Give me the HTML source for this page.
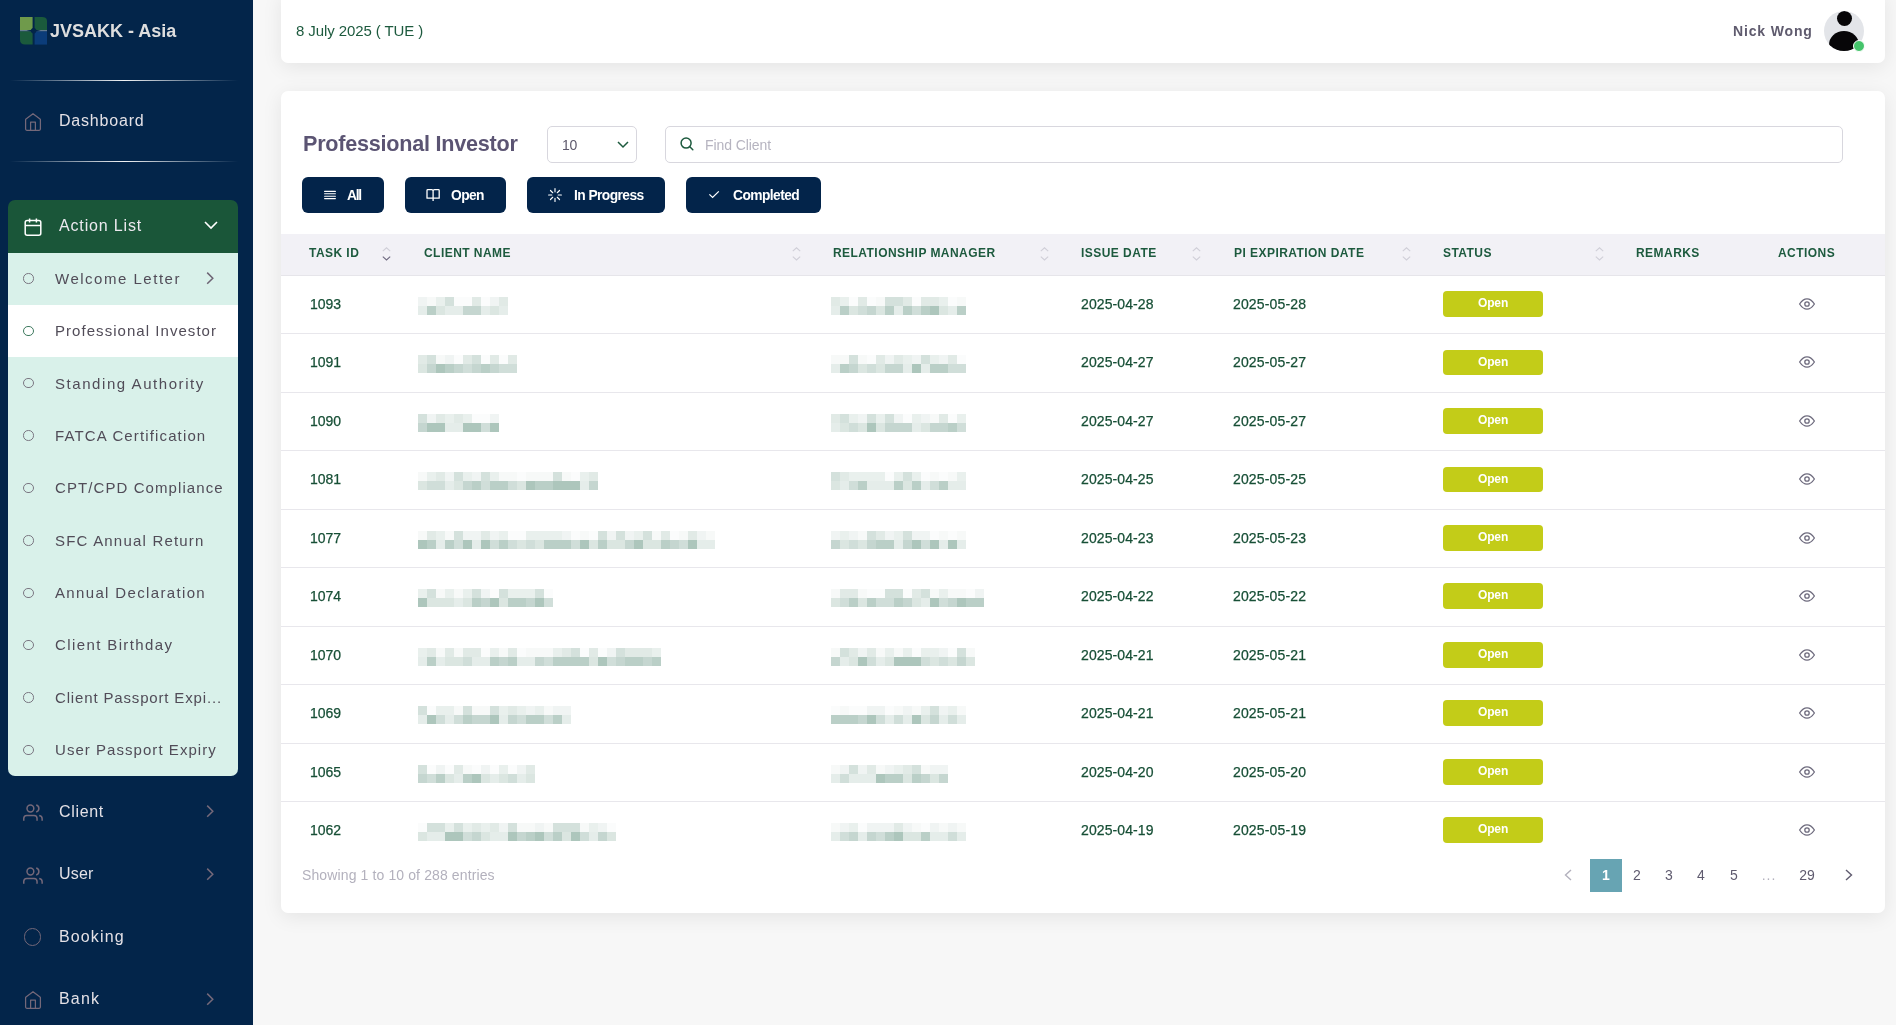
<!DOCTYPE html>
<html><head><meta charset="utf-8"><title>Professional Investor</title>
<style>
html,body{margin:0;padding:0}
body{width:1896px;height:1025px;overflow:hidden;position:relative;background:#f7f7f7;font-family:"Liberation Sans", sans-serif}
#sb{position:absolute;left:0;top:0;width:253px;height:1025px;background:#03254a}
.t{position:absolute;white-space:nowrap;line-height:1;will-change:transform}
.hr{position:absolute;left:10px;width:228px;height:1px;background:linear-gradient(90deg,rgba(255,255,255,0),rgba(255,255,255,0.95) 50%,rgba(255,255,255,0))}
.card{position:absolute;background:#fff;border-radius:7px;box-shadow:0 4px 20px rgba(0,0,0,0.08)}
.mz{position:absolute;height:18px}
.mz i{position:absolute;width:9px;height:9px;display:block}
</style></head><body>
<div id="sb">
<svg style="position:absolute;left:19.5px;top:17.15px" width="27.2" height="27.6" viewBox="0 0 27.2 27.6">
<path d="M0 0 H12.6 V13.1 H0 Z" fill="#6f9a4b"/>
<path d="M14.6 0 H22.2 Q27.2 0 27.2 5 V13.1 H14.6 Z" fill="#1b5a3c"/>
<path d="M0 14.2 H12.6 V27.6 H5 Q0 27.6 0 22.6 Z" fill="#1b5a3c"/>
<path d="M14.6 14.2 H27.2 V27.6 H14.6 Z" fill="#0b3c79"/>
<rect x="0" y="13.1" width="27.2" height="1.1" fill="#6f8699"/>
<path d="M13.6 9.4 C14 11.6 14.9 12.6 17 13.1 L20.8 13.65 L17 14.2 C14.9 14.7 14 15.8 13.6 18.2 C13.2 15.8 12.3 14.7 10.2 14.2 L6.4 13.65 L10.2 13.1 C12.3 12.6 13.2 11.6 13.6 9.4 Z" fill="#03254a"/><circle cx="13.6" cy="13.65" r="2.6" fill="#03254a"/>
</svg>
<div class="t" style="left:50.4px;top:21.76px;font-size:18px;color:#dedede;font-weight:700;">JVSAKK - Asia</div>
<div class="hr" style="top:80px"></div>
<div class="hr" style="top:161px"></div>
<svg style="position:absolute;left:20px;top:110px" width="26" height="24" viewBox="0 0 26 24"><path d="M5.6 9.6 Q5.6 9.2 6 8.9 L13 3.7 L20 8.9 Q20.4 9.2 20.4 9.6 V19.1 Q20.4 20.3 19.2 20.3 H6.8 Q5.6 20.3 5.6 19.1 Z M10.6 20.3 V12 H15.4 V20.3" fill="none" stroke="#746879" stroke-width="1.25" stroke-linejoin="round"/></svg>
<div class="t" style="left:59.3px;top:113.06px;font-size:16px;color:#e4e1e6;letter-spacing:0.806px;">Dashboard</div>
<div style="position:absolute;left:8px;top:200px;width:230px;height:53px;background:#1a5639;border-radius:7px 7px 0 0"></div>
<svg style="position:absolute;left:23px;top:217px" width="20" height="20" viewBox="0 0 20 20"><rect x="2.2" y="3.6" width="15.6" height="14.6" rx="2" fill="none" stroke="#fff" stroke-width="1.5"/><path d="M2.2 8.4 H17.8 M6.6 1.6 V5.6 M13.4 1.6 V5.6" stroke="#fff" stroke-width="1.5" fill="none"/></svg>
<div class="t" style="left:58.5px;top:218.06px;font-size:16px;color:#ece9ef;letter-spacing:0.84px;">Action List</div>
<svg style="position:absolute;left:203px;top:219px" width="16" height="12" viewBox="0 0 16 12"><path d="M2 3 L8 9 L14 3" fill="none" stroke="#fff" stroke-width="1.6"/></svg>
<div style="position:absolute;left:8px;top:253px;width:230px;height:522.5px;background:#d9f1ea;border-radius:0 0 7px 7px"></div>
<div style="position:absolute;left:23.3px;top:273.30px;width:8.4px;height:8.4px;border:1.1px solid #7b7782;border-radius:50%"></div>
<div class="t" style="left:54.8px;top:270.90px;font-size:15px;color:#514c58;letter-spacing:1.512px;">Welcome Letter</div>
<div style="position:absolute;left:8px;top:305px;width:230px;height:52px;background:#fff"></div>
<div style="position:absolute;left:23.3px;top:325.67px;width:8.4px;height:8.4px;border:1.1px solid #3f7a5f;border-radius:50%"></div>
<div class="t" style="left:54.8px;top:323.27px;font-size:15px;color:#514c58;letter-spacing:1.047px;">Professional Investor</div>
<div style="position:absolute;left:23.3px;top:378.04px;width:8.4px;height:8.4px;border:1.1px solid #7b7782;border-radius:50%"></div>
<div class="t" style="left:54.8px;top:375.64px;font-size:15px;color:#514c58;letter-spacing:1.562px;">Standing Authority</div>
<div style="position:absolute;left:23.3px;top:430.41px;width:8.4px;height:8.4px;border:1.1px solid #7b7782;border-radius:50%"></div>
<div class="t" style="left:54.8px;top:428.01px;font-size:15px;color:#514c58;letter-spacing:1.136px;">FATCA Certification</div>
<div style="position:absolute;left:23.3px;top:482.78px;width:8.4px;height:8.4px;border:1.1px solid #7b7782;border-radius:50%"></div>
<div class="t" style="left:54.8px;top:480.38px;font-size:15px;color:#514c58;letter-spacing:1.082px;">CPT/CPD Compliance</div>
<div style="position:absolute;left:23.3px;top:535.15px;width:8.4px;height:8.4px;border:1.1px solid #7b7782;border-radius:50%"></div>
<div class="t" style="left:54.8px;top:532.75px;font-size:15px;color:#514c58;letter-spacing:1.197px;">SFC Annual Return</div>
<div style="position:absolute;left:23.3px;top:587.52px;width:8.4px;height:8.4px;border:1.1px solid #7b7782;border-radius:50%"></div>
<div class="t" style="left:54.8px;top:585.12px;font-size:15px;color:#514c58;letter-spacing:1.35px;">Annual Declaration</div>
<div style="position:absolute;left:23.3px;top:639.89px;width:8.4px;height:8.4px;border:1.1px solid #7b7782;border-radius:50%"></div>
<div class="t" style="left:54.8px;top:637.49px;font-size:15px;color:#514c58;letter-spacing:1.389px;">Client Birthday</div>
<div style="position:absolute;left:23.3px;top:692.26px;width:8.4px;height:8.4px;border:1.1px solid #7b7782;border-radius:50%"></div>
<div class="t" style="left:54.8px;top:689.86px;font-size:15px;color:#514c58;letter-spacing:0.843px;">Client Passport Expi...</div>
<div style="position:absolute;left:23.3px;top:744.63px;width:8.4px;height:8.4px;border:1.1px solid #7b7782;border-radius:50%"></div>
<div class="t" style="left:54.8px;top:742.23px;font-size:15px;color:#514c58;letter-spacing:1.045px;">User Passport Expiry</div>
<svg style="position:absolute;left:204px;top:270px" width="12" height="16" viewBox="0 0 12 16"><path d="M3.2 2.6 L8.8 8.2 L3.2 13.8" fill="none" stroke="#6d6474" stroke-width="1.5"/></svg>
<svg style="position:absolute;left:22px;top:801.3px" width="22" height="20" viewBox="0 0 22 20"><circle cx="8.4" cy="7.5" r="3.4" fill="none" stroke="#746879" stroke-width="1.5"/><path d="M1.75 19.7 V17.6 Q1.75 14.55 4.8 14.55 H12 Q15.05 14.55 15.05 17.6 V19.7" fill="none" stroke="#746879" stroke-width="1.5"/><path d="M14.2 4.1 A3.5 3.5 0 0 1 14.2 10.9 M17.2 14.6 Q20.15 15.2 20.15 17.8 V19.7" fill="none" stroke="#746879" stroke-width="1.5"/></svg>
<div class="t" style="left:59px;top:803.96px;font-size:16px;color:#e4e1e6;letter-spacing:0.66px;">Client</div>
<svg style="position:absolute;left:204px;top:803.3px" width="12" height="16" viewBox="0 0 12 16"><path d="M3.2 2.6 L8.8 8.2 L3.2 13.8" fill="none" stroke="#75697a" stroke-width="1.5"/></svg>
<svg style="position:absolute;left:22px;top:863.5px" width="22" height="20" viewBox="0 0 22 20"><circle cx="8.4" cy="7.5" r="3.4" fill="none" stroke="#746879" stroke-width="1.5"/><path d="M1.75 19.7 V17.6 Q1.75 14.55 4.8 14.55 H12 Q15.05 14.55 15.05 17.6 V19.7" fill="none" stroke="#746879" stroke-width="1.5"/><path d="M14.2 4.1 A3.5 3.5 0 0 1 14.2 10.9 M17.2 14.6 Q20.15 15.2 20.15 17.8 V19.7" fill="none" stroke="#746879" stroke-width="1.5"/></svg>
<div class="t" style="left:59px;top:866.16px;font-size:16px;color:#e4e1e6;letter-spacing:0.167px;">User</div>
<svg style="position:absolute;left:204px;top:865.5px" width="12" height="16" viewBox="0 0 12 16"><path d="M3.2 2.6 L8.8 8.2 L3.2 13.8" fill="none" stroke="#75697a" stroke-width="1.5"/></svg>
<div style="position:absolute;left:23.6px;top:928.4px;width:15.8px;height:15.8px;border:1.4px solid #746879;border-radius:50%"></div>
<div class="t" style="left:59px;top:929.06px;font-size:16px;color:#e4e1e6;letter-spacing:1.133px;">Booking</div>
<svg style="position:absolute;left:20px;top:988.0px" width="26" height="24" viewBox="0 0 26 24"><path d="M5.6 9.6 Q5.6 9.2 6 8.9 L13 3.7 L20 8.9 Q20.4 9.2 20.4 9.6 V19.1 Q20.4 20.3 19.2 20.3 H6.8 Q5.6 20.3 5.6 19.1 Z M10.6 20.3 V12 H15.4 V20.3" fill="none" stroke="#746879" stroke-width="1.25" stroke-linejoin="round"/></svg>
<div class="t" style="left:59px;top:991.26px;font-size:16px;color:#e4e1e6;letter-spacing:1.167px;">Bank</div>
<svg style="position:absolute;left:204px;top:990.6px" width="12" height="16" viewBox="0 0 12 16"><path d="M3.2 2.6 L8.8 8.2 L3.2 13.8" fill="none" stroke="#75697a" stroke-width="1.5"/></svg>
</div>
<div class="card" style="left:281px;top:-8px;width:1604px;height:71px"></div>
<div class="t" style="left:295.5px;top:23.40px;font-size:15px;color:#1d5a3e;letter-spacing:-0.1px;">8 July 2025 ( TUE )</div>
<div class="t" style="left:1732.5px;top:23.85px;font-size:14px;color:#5f5b6e;font-weight:700;letter-spacing:0.85px;">Nick Wong</div>
<div style="position:absolute;left:1824px;top:11px;width:40px;height:40px;border-radius:50%;background:#e3e5e9;overflow:hidden">
<div style="position:absolute;left:12.5px;top:0px;width:15px;height:15px;border-radius:50%;background:#070608"></div>
<div style="position:absolute;left:5px;top:20px;width:30px;height:28px;border-radius:50%;background:#070608"></div>
</div>
<div style="position:absolute;left:1852.7px;top:39.9px;width:10px;height:10px;border-radius:50%;background:#45c46b;border:1px solid #fff"></div>
<div class="card" style="left:281px;top:91px;width:1604px;height:822px"></div>
<div class="t" style="left:302.6px;top:133.12px;font-size:21.6px;color:#5b5473;font-weight:700;letter-spacing:-0.235px;">Professional Investor</div>
<div style="position:absolute;left:547px;top:126px;width:88px;height:34.5px;border:1px solid #d8d7de;border-radius:5px;background:#fff"></div>
<div class="t" style="left:561.7px;top:138.35px;font-size:14px;color:#5d596c;letter-spacing:-0.3px;">10</div>
<svg style="position:absolute;left:616px;top:139px" width="14" height="12" viewBox="0 0 14 12"><path d="M2 3 L7 8 L12 3" fill="none" stroke="#1d5a3e" stroke-width="1.5"/></svg>
<div style="position:absolute;left:665px;top:126px;width:1176px;height:34.5px;border:1px solid #d8d7de;border-radius:5px;background:#fff"></div>
<svg style="position:absolute;left:678px;top:135px" width="18" height="18" viewBox="0 0 18 18"><circle cx="8.1" cy="8.1" r="5" fill="none" stroke="#1d5a3e" stroke-width="1.5"/><path d="M11.8 11.8 L14.8 14.8" stroke="#1d5a3e" stroke-width="1.5" stroke-linecap="round"/></svg>
<div class="t" style="left:705.2px;top:137.55px;font-size:14px;color:#b6b4c0;letter-spacing:-0.09px;">Find Client</div>
<div style="position:absolute;left:302px;top:177px;width:82px;height:36px;background:#03244a;border-radius:6px"></div>
<div class="t" style="left:347px;top:188.52px;font-size:13.8px;color:#fff;font-weight:700;letter-spacing:-1.225px;">All</div>
<div style="position:absolute;left:405px;top:177px;width:101px;height:36px;background:#03244a;border-radius:6px"></div>
<div class="t" style="left:450.8px;top:188.52px;font-size:13.8px;color:#fff;font-weight:700;letter-spacing:-0.583px;">Open</div>
<div style="position:absolute;left:527px;top:177px;width:138px;height:36px;background:#03244a;border-radius:6px"></div>
<div class="t" style="left:573.6px;top:188.52px;font-size:13.8px;color:#fff;font-weight:700;letter-spacing:-0.565px;">In Progress</div>
<div style="position:absolute;left:686px;top:177px;width:135px;height:36px;background:#03244a;border-radius:6px"></div>
<div class="t" style="left:732.6px;top:188.52px;font-size:13.8px;color:#fff;font-weight:700;letter-spacing:-0.575px;">Completed</div>
<svg style="position:absolute;left:323px;top:189px" width="14" height="12" viewBox="0 0 14 12"><path d="M1.6 2.4 H12.4 M1.6 4.7 H12.4 M1.6 7.3 H12.4 M1.6 9.6 H12.4" stroke="#fff" stroke-width="1.1" stroke-linecap="round"/></svg>
<svg style="position:absolute;left:425px;top:188px" width="16" height="14" viewBox="0 0 16 14"><path d="M2 10.2 V2.4 Q2 1.6 2.8 1.6 H6.6 Q8.1 1.6 8.1 3 Q8.1 1.6 9.6 1.6 H13.4 Q14.2 1.6 14.2 2.4 V10.2 Z M8.1 3 V12.9" fill="none" stroke="#fff" stroke-width="1.3" stroke-linejoin="round"/></svg>
<svg style="position:absolute;left:548px;top:188px" width="14" height="14" viewBox="0 0 14 14"><path d="M10.20 7.00 L13.40 7.00 M9.26 9.26 L11.53 11.53 M7.00 10.20 L7.00 13.40 M4.74 9.26 L2.47 11.53 M3.80 7.00 L0.60 7.00 M4.74 4.74 L2.47 2.47 M7.00 3.80 L7.00 0.60 M9.26 4.74 L11.53 2.47 " stroke="#fff" stroke-width="1.15" stroke-linecap="round"/></svg>
<svg style="position:absolute;left:707px;top:187.1px" width="14" height="14" viewBox="0 0 14 14"><path d="M2.4 7.4 L5.6 10.4 L11.8 4.4" fill="none" stroke="#fff" stroke-width="1.3"/></svg>
<div style="position:absolute;left:281px;top:234px;width:1604px;height:40.6px;background:#f2f1f6;border-bottom:1px solid #e6e5ea"></div>
<div class="t" style="left:309px;top:247.04px;font-size:12px;color:#1d5a3e;font-weight:700;letter-spacing:0.45px;">TASK ID</div>
<svg style="position:absolute;left:381px;top:245.5px" width="11" height="16" viewBox="0 0 11 16"><path d="M1.8 5.2 L5.5 1.8 L9.2 5.2" fill="none" stroke="#d0cfd8" stroke-width="1.1"/><path d="M1.8 10.6 L5.5 14 L9.2 10.6" fill="none" stroke="#6f6a80" stroke-width="1.1"/></svg>
<div class="t" style="left:423.8px;top:247.04px;font-size:12px;color:#1d5a3e;font-weight:700;letter-spacing:0.45px;">CLIENT NAME</div>
<svg style="position:absolute;left:790.5px;top:245.5px" width="11" height="16" viewBox="0 0 11 16"><path d="M1.8 5.2 L5.5 1.8 L9.2 5.2" fill="none" stroke="#d0cfd8" stroke-width="1.1"/><path d="M1.8 10.6 L5.5 14 L9.2 10.6" fill="none" stroke="#d0cfd8" stroke-width="1.1"/></svg>
<div class="t" style="left:833.2px;top:247.04px;font-size:12px;color:#1d5a3e;font-weight:700;letter-spacing:0.45px;">RELATIONSHIP MANAGER</div>
<svg style="position:absolute;left:1038.6px;top:245.5px" width="11" height="16" viewBox="0 0 11 16"><path d="M1.8 5.2 L5.5 1.8 L9.2 5.2" fill="none" stroke="#d0cfd8" stroke-width="1.1"/><path d="M1.8 10.6 L5.5 14 L9.2 10.6" fill="none" stroke="#d0cfd8" stroke-width="1.1"/></svg>
<div class="t" style="left:1080.5px;top:247.04px;font-size:12px;color:#1d5a3e;font-weight:700;letter-spacing:0.45px;">ISSUE DATE</div>
<svg style="position:absolute;left:1190.5px;top:245.5px" width="11" height="16" viewBox="0 0 11 16"><path d="M1.8 5.2 L5.5 1.8 L9.2 5.2" fill="none" stroke="#d0cfd8" stroke-width="1.1"/><path d="M1.8 10.6 L5.5 14 L9.2 10.6" fill="none" stroke="#d0cfd8" stroke-width="1.1"/></svg>
<div class="t" style="left:1233.5px;top:247.04px;font-size:12px;color:#1d5a3e;font-weight:700;letter-spacing:0.45px;">PI EXPIRATION DATE</div>
<svg style="position:absolute;left:1400.5px;top:245.5px" width="11" height="16" viewBox="0 0 11 16"><path d="M1.8 5.2 L5.5 1.8 L9.2 5.2" fill="none" stroke="#d0cfd8" stroke-width="1.1"/><path d="M1.8 10.6 L5.5 14 L9.2 10.6" fill="none" stroke="#d0cfd8" stroke-width="1.1"/></svg>
<div class="t" style="left:1442.8px;top:247.04px;font-size:12px;color:#1d5a3e;font-weight:700;letter-spacing:0.45px;">STATUS</div>
<svg style="position:absolute;left:1594px;top:245.5px" width="11" height="16" viewBox="0 0 11 16"><path d="M1.8 5.2 L5.5 1.8 L9.2 5.2" fill="none" stroke="#d0cfd8" stroke-width="1.1"/><path d="M1.8 10.6 L5.5 14 L9.2 10.6" fill="none" stroke="#d0cfd8" stroke-width="1.1"/></svg>
<div class="t" style="left:1635.9px;top:247.04px;font-size:12px;color:#1d5a3e;font-weight:700;letter-spacing:0.45px;">REMARKS</div>
<div class="t" style="left:1778px;top:247.04px;font-size:12px;color:#1d5a3e;font-weight:700;letter-spacing:0.45px;">ACTIONS</div>
<div style="position:absolute;left:281px;top:333.1px;width:1604px;height:1px;background:#e8e7ec"></div>
<div class="t" style="left:309.5px;top:296.85px;font-size:14px;color:#174f36;-webkit-text-stroke:0.25px #174f36">1093</div>
<div class="mz" style="left:418px;top:296.9px;width:90px"><i style="left:0px;top:0px;background:rgba(40,105,80,0.07)"></i><i style="left:9px;top:0px;background:rgba(40,105,80,0.04)"></i><i style="left:18px;top:0px;background:rgba(40,105,80,0.1)"></i><i style="left:27px;top:0px;background:rgba(40,105,80,0.2)"></i><i style="left:36px;top:0px;background:rgba(40,105,80,0.02)"></i><i style="left:45px;top:0px;background:rgba(40,105,80,0.02)"></i><i style="left:54px;top:0px;background:rgba(40,105,80,0.14)"></i><i style="left:63px;top:0px;background:rgba(40,105,80,0.02)"></i><i style="left:72px;top:0px;background:rgba(40,105,80,0.07)"></i><i style="left:81px;top:0px;background:rgba(40,105,80,0.14)"></i><i style="left:0px;top:9px;background:rgba(40,105,80,0.12)"></i><i style="left:9px;top:9px;background:rgba(40,105,80,0.32)"></i><i style="left:18px;top:9px;background:rgba(40,105,80,0.17)"></i><i style="left:27px;top:9px;background:rgba(40,105,80,0.12)"></i><i style="left:36px;top:9px;background:rgba(40,105,80,0.12)"></i><i style="left:45px;top:9px;background:rgba(40,105,80,0.27)"></i><i style="left:54px;top:9px;background:rgba(40,105,80,0.27)"></i><i style="left:63px;top:9px;background:rgba(40,105,80,0.12)"></i><i style="left:72px;top:9px;background:rgba(40,105,80,0.17)"></i><i style="left:81px;top:9px;background:rgba(40,105,80,0.12)"></i></div>
<div class="mz" style="left:831px;top:296.9px;width:135px"><i style="left:0px;top:0px;background:rgba(40,105,80,0.14)"></i><i style="left:9px;top:0px;background:rgba(40,105,80,0.1)"></i><i style="left:18px;top:0px;background:rgba(40,105,80,0.02)"></i><i style="left:27px;top:0px;background:rgba(40,105,80,0.14)"></i><i style="left:36px;top:0px;background:rgba(40,105,80,0.02)"></i><i style="left:45px;top:0px;background:rgba(40,105,80,0.04)"></i><i style="left:54px;top:0px;background:rgba(40,105,80,0.2)"></i><i style="left:63px;top:0px;background:rgba(40,105,80,0.2)"></i><i style="left:72px;top:0px;background:rgba(40,105,80,0.14)"></i><i style="left:81px;top:0px;background:rgba(40,105,80,0.02)"></i><i style="left:90px;top:0px;background:rgba(40,105,80,0.14)"></i><i style="left:99px;top:0px;background:rgba(40,105,80,0.14)"></i><i style="left:108px;top:0px;background:rgba(40,105,80,0.1)"></i><i style="left:117px;top:0px;background:rgba(40,105,80,0.02)"></i><i style="left:126px;top:0px;background:rgba(40,105,80,0.04)"></i><i style="left:0px;top:9px;background:rgba(40,105,80,0.12)"></i><i style="left:9px;top:9px;background:rgba(40,105,80,0.32)"></i><i style="left:18px;top:9px;background:rgba(40,105,80,0.17)"></i><i style="left:27px;top:9px;background:rgba(40,105,80,0.22)"></i><i style="left:36px;top:9px;background:rgba(40,105,80,0.27)"></i><i style="left:45px;top:9px;background:rgba(40,105,80,0.17)"></i><i style="left:54px;top:9px;background:rgba(40,105,80,0.32)"></i><i style="left:63px;top:9px;background:rgba(40,105,80,0.12)"></i><i style="left:72px;top:9px;background:rgba(40,105,80,0.32)"></i><i style="left:81px;top:9px;background:rgba(40,105,80,0.22)"></i><i style="left:90px;top:9px;background:rgba(40,105,80,0.32)"></i><i style="left:99px;top:9px;background:rgba(40,105,80,0.38)"></i><i style="left:108px;top:9px;background:rgba(40,105,80,0.17)"></i><i style="left:117px;top:9px;background:rgba(40,105,80,0.12)"></i><i style="left:126px;top:9px;background:rgba(40,105,80,0.32)"></i></div>
<div class="t" style="left:1080.5px;top:296.85px;font-size:14px;color:#174f36;letter-spacing:0.1px;-webkit-text-stroke:0.25px #174f36">2025-04-28</div>
<div class="t" style="left:1233.3px;top:296.85px;font-size:14px;color:#174f36;letter-spacing:0.15px;-webkit-text-stroke:0.25px #174f36">2025-05-28</div>
<div style="position:absolute;left:1443px;top:291.1px;width:100px;height:25.8px;background:#c3cc18;border-radius:4px"></div>
<div class="t" style="left:1477.5px;top:297.14px;font-size:12px;color:#fff;font-weight:700;letter-spacing:-0.15px;">Open</div>
<svg style="position:absolute;left:1797px;top:295.9px" width="20" height="16" viewBox="0 0 20 16"><circle cx="10" cy="8" r="2.2" fill="none" stroke="#6d6a7d" stroke-width="1.3"/><path d="M2.6 8 Q6 2.8 10 2.8 Q14 2.8 17.4 8 Q14 13.2 10 13.2 Q6 13.2 2.6 8 Z" fill="none" stroke="#6d6a7d" stroke-width="1.3" stroke-linejoin="round"/></svg>
<div style="position:absolute;left:281px;top:391.6px;width:1604px;height:1px;background:#e8e7ec"></div>
<div class="t" style="left:309.5px;top:355.31px;font-size:14px;color:#174f36;-webkit-text-stroke:0.25px #174f36">1091</div>
<div class="mz" style="left:418px;top:355.4px;width:99px"><i style="left:0px;top:0px;background:rgba(40,105,80,0.14)"></i><i style="left:9px;top:0px;background:rgba(40,105,80,0.2)"></i><i style="left:18px;top:0px;background:rgba(40,105,80,0.04)"></i><i style="left:27px;top:0px;background:rgba(40,105,80,0.07)"></i><i style="left:36px;top:0px;background:rgba(40,105,80,0.02)"></i><i style="left:45px;top:0px;background:rgba(40,105,80,0.14)"></i><i style="left:54px;top:0px;background:rgba(40,105,80,0.2)"></i><i style="left:63px;top:0px;background:rgba(40,105,80,0.02)"></i><i style="left:72px;top:0px;background:rgba(40,105,80,0.14)"></i><i style="left:81px;top:0px;background:rgba(40,105,80,0.02)"></i><i style="left:90px;top:0px;background:rgba(40,105,80,0.14)"></i><i style="left:0px;top:9px;background:rgba(40,105,80,0.17)"></i><i style="left:9px;top:9px;background:rgba(40,105,80,0.27)"></i><i style="left:18px;top:9px;background:rgba(40,105,80,0.38)"></i><i style="left:27px;top:9px;background:rgba(40,105,80,0.32)"></i><i style="left:36px;top:9px;background:rgba(40,105,80,0.27)"></i><i style="left:45px;top:9px;background:rgba(40,105,80,0.22)"></i><i style="left:54px;top:9px;background:rgba(40,105,80,0.27)"></i><i style="left:63px;top:9px;background:rgba(40,105,80,0.32)"></i><i style="left:72px;top:9px;background:rgba(40,105,80,0.27)"></i><i style="left:81px;top:9px;background:rgba(40,105,80,0.22)"></i><i style="left:90px;top:9px;background:rgba(40,105,80,0.22)"></i></div>
<div class="mz" style="left:831px;top:355.4px;width:135px"><i style="left:0px;top:0px;background:rgba(40,105,80,0.04)"></i><i style="left:9px;top:0px;background:rgba(40,105,80,0.04)"></i><i style="left:18px;top:0px;background:rgba(40,105,80,0.2)"></i><i style="left:27px;top:0px;background:rgba(40,105,80,0.04)"></i><i style="left:36px;top:0px;background:rgba(40,105,80,0.02)"></i><i style="left:45px;top:0px;background:rgba(40,105,80,0.14)"></i><i style="left:54px;top:0px;background:rgba(40,105,80,0.07)"></i><i style="left:63px;top:0px;background:rgba(40,105,80,0.14)"></i><i style="left:72px;top:0px;background:rgba(40,105,80,0.1)"></i><i style="left:81px;top:0px;background:rgba(40,105,80,0.07)"></i><i style="left:90px;top:0px;background:rgba(40,105,80,0.2)"></i><i style="left:99px;top:0px;background:rgba(40,105,80,0.1)"></i><i style="left:108px;top:0px;background:rgba(40,105,80,0.07)"></i><i style="left:117px;top:0px;background:rgba(40,105,80,0.14)"></i><i style="left:126px;top:0px;background:rgba(40,105,80,0.02)"></i><i style="left:0px;top:9px;background:rgba(40,105,80,0.12)"></i><i style="left:9px;top:9px;background:rgba(40,105,80,0.32)"></i><i style="left:18px;top:9px;background:rgba(40,105,80,0.27)"></i><i style="left:27px;top:9px;background:rgba(40,105,80,0.17)"></i><i style="left:36px;top:9px;background:rgba(40,105,80,0.22)"></i><i style="left:45px;top:9px;background:rgba(40,105,80,0.17)"></i><i style="left:54px;top:9px;background:rgba(40,105,80,0.27)"></i><i style="left:63px;top:9px;background:rgba(40,105,80,0.27)"></i><i style="left:72px;top:9px;background:rgba(40,105,80,0.12)"></i><i style="left:81px;top:9px;background:rgba(40,105,80,0.38)"></i><i style="left:90px;top:9px;background:rgba(40,105,80,0.12)"></i><i style="left:99px;top:9px;background:rgba(40,105,80,0.32)"></i><i style="left:108px;top:9px;background:rgba(40,105,80,0.32)"></i><i style="left:117px;top:9px;background:rgba(40,105,80,0.22)"></i><i style="left:126px;top:9px;background:rgba(40,105,80,0.22)"></i></div>
<div class="t" style="left:1080.5px;top:355.31px;font-size:14px;color:#174f36;letter-spacing:0.1px;-webkit-text-stroke:0.25px #174f36">2025-04-27</div>
<div class="t" style="left:1233.3px;top:355.31px;font-size:14px;color:#174f36;letter-spacing:0.15px;-webkit-text-stroke:0.25px #174f36">2025-05-27</div>
<div style="position:absolute;left:1443px;top:349.6px;width:100px;height:25.8px;background:#c3cc18;border-radius:4px"></div>
<div class="t" style="left:1477.5px;top:355.60px;font-size:12px;color:#fff;font-weight:700;letter-spacing:-0.15px;">Open</div>
<svg style="position:absolute;left:1797px;top:354.4px" width="20" height="16" viewBox="0 0 20 16"><circle cx="10" cy="8" r="2.2" fill="none" stroke="#6d6a7d" stroke-width="1.3"/><path d="M2.6 8 Q6 2.8 10 2.8 Q14 2.8 17.4 8 Q14 13.2 10 13.2 Q6 13.2 2.6 8 Z" fill="none" stroke="#6d6a7d" stroke-width="1.3" stroke-linejoin="round"/></svg>
<div style="position:absolute;left:281px;top:450.1px;width:1604px;height:1px;background:#e8e7ec"></div>
<div class="t" style="left:309.5px;top:413.77px;font-size:14px;color:#174f36;-webkit-text-stroke:0.25px #174f36">1090</div>
<div class="mz" style="left:418px;top:413.8px;width:81px"><i style="left:0px;top:0px;background:rgba(40,105,80,0.2)"></i><i style="left:9px;top:0px;background:rgba(40,105,80,0.07)"></i><i style="left:18px;top:0px;background:rgba(40,105,80,0.14)"></i><i style="left:27px;top:0px;background:rgba(40,105,80,0.1)"></i><i style="left:36px;top:0px;background:rgba(40,105,80,0.14)"></i><i style="left:45px;top:0px;background:rgba(40,105,80,0.1)"></i><i style="left:54px;top:0px;background:rgba(40,105,80,0.02)"></i><i style="left:63px;top:0px;background:rgba(40,105,80,0.02)"></i><i style="left:72px;top:0px;background:rgba(40,105,80,0.07)"></i><i style="left:0px;top:9px;background:rgba(40,105,80,0.27)"></i><i style="left:9px;top:9px;background:rgba(40,105,80,0.38)"></i><i style="left:18px;top:9px;background:rgba(40,105,80,0.38)"></i><i style="left:27px;top:9px;background:rgba(40,105,80,0.12)"></i><i style="left:36px;top:9px;background:rgba(40,105,80,0.12)"></i><i style="left:45px;top:9px;background:rgba(40,105,80,0.38)"></i><i style="left:54px;top:9px;background:rgba(40,105,80,0.38)"></i><i style="left:63px;top:9px;background:rgba(40,105,80,0.22)"></i><i style="left:72px;top:9px;background:rgba(40,105,80,0.38)"></i></div>
<div class="mz" style="left:831px;top:413.8px;width:135px"><i style="left:0px;top:0px;background:rgba(40,105,80,0.14)"></i><i style="left:9px;top:0px;background:rgba(40,105,80,0.2)"></i><i style="left:18px;top:0px;background:rgba(40,105,80,0.1)"></i><i style="left:27px;top:0px;background:rgba(40,105,80,0.07)"></i><i style="left:36px;top:0px;background:rgba(40,105,80,0.2)"></i><i style="left:45px;top:0px;background:rgba(40,105,80,0.1)"></i><i style="left:54px;top:0px;background:rgba(40,105,80,0.2)"></i><i style="left:63px;top:0px;background:rgba(40,105,80,0.07)"></i><i style="left:72px;top:0px;background:rgba(40,105,80,0.02)"></i><i style="left:81px;top:0px;background:rgba(40,105,80,0.1)"></i><i style="left:90px;top:0px;background:rgba(40,105,80,0.07)"></i><i style="left:99px;top:0px;background:rgba(40,105,80,0.04)"></i><i style="left:108px;top:0px;background:rgba(40,105,80,0.14)"></i><i style="left:117px;top:0px;background:rgba(40,105,80,0.02)"></i><i style="left:126px;top:0px;background:rgba(40,105,80,0.1)"></i><i style="left:0px;top:9px;background:rgba(40,105,80,0.12)"></i><i style="left:9px;top:9px;background:rgba(40,105,80,0.17)"></i><i style="left:18px;top:9px;background:rgba(40,105,80,0.22)"></i><i style="left:27px;top:9px;background:rgba(40,105,80,0.17)"></i><i style="left:36px;top:9px;background:rgba(40,105,80,0.38)"></i><i style="left:45px;top:9px;background:rgba(40,105,80,0.17)"></i><i style="left:54px;top:9px;background:rgba(40,105,80,0.27)"></i><i style="left:63px;top:9px;background:rgba(40,105,80,0.27)"></i><i style="left:72px;top:9px;background:rgba(40,105,80,0.27)"></i><i style="left:81px;top:9px;background:rgba(40,105,80,0.12)"></i><i style="left:90px;top:9px;background:rgba(40,105,80,0.17)"></i><i style="left:99px;top:9px;background:rgba(40,105,80,0.27)"></i><i style="left:108px;top:9px;background:rgba(40,105,80,0.27)"></i><i style="left:117px;top:9px;background:rgba(40,105,80,0.32)"></i><i style="left:126px;top:9px;background:rgba(40,105,80,0.22)"></i></div>
<div class="t" style="left:1080.5px;top:413.77px;font-size:14px;color:#174f36;letter-spacing:0.1px;-webkit-text-stroke:0.25px #174f36">2025-04-27</div>
<div class="t" style="left:1233.3px;top:413.77px;font-size:14px;color:#174f36;letter-spacing:0.15px;-webkit-text-stroke:0.25px #174f36">2025-05-27</div>
<div style="position:absolute;left:1443px;top:408.0px;width:100px;height:25.8px;background:#c3cc18;border-radius:4px"></div>
<div class="t" style="left:1477.5px;top:414.06px;font-size:12px;color:#fff;font-weight:700;letter-spacing:-0.15px;">Open</div>
<svg style="position:absolute;left:1797px;top:412.8px" width="20" height="16" viewBox="0 0 20 16"><circle cx="10" cy="8" r="2.2" fill="none" stroke="#6d6a7d" stroke-width="1.3"/><path d="M2.6 8 Q6 2.8 10 2.8 Q14 2.8 17.4 8 Q14 13.2 10 13.2 Q6 13.2 2.6 8 Z" fill="none" stroke="#6d6a7d" stroke-width="1.3" stroke-linejoin="round"/></svg>
<div style="position:absolute;left:281px;top:508.6px;width:1604px;height:1px;background:#e8e7ec"></div>
<div class="t" style="left:309.5px;top:472.23px;font-size:14px;color:#174f36;-webkit-text-stroke:0.25px #174f36">1081</div>
<div class="mz" style="left:418px;top:472.3px;width:180px"><i style="left:0px;top:0px;background:rgba(40,105,80,0.04)"></i><i style="left:9px;top:0px;background:rgba(40,105,80,0.1)"></i><i style="left:18px;top:0px;background:rgba(40,105,80,0.14)"></i><i style="left:27px;top:0px;background:rgba(40,105,80,0.07)"></i><i style="left:36px;top:0px;background:rgba(40,105,80,0.2)"></i><i style="left:45px;top:0px;background:rgba(40,105,80,0.1)"></i><i style="left:54px;top:0px;background:rgba(40,105,80,0.07)"></i><i style="left:63px;top:0px;background:rgba(40,105,80,0.2)"></i><i style="left:72px;top:0px;background:rgba(40,105,80,0.1)"></i><i style="left:81px;top:0px;background:rgba(40,105,80,0.04)"></i><i style="left:90px;top:0px;background:rgba(40,105,80,0.04)"></i><i style="left:99px;top:0px;background:rgba(40,105,80,0.02)"></i><i style="left:108px;top:0px;background:rgba(40,105,80,0.04)"></i><i style="left:117px;top:0px;background:rgba(40,105,80,0.04)"></i><i style="left:126px;top:0px;background:rgba(40,105,80,0.04)"></i><i style="left:135px;top:0px;background:rgba(40,105,80,0.2)"></i><i style="left:144px;top:0px;background:rgba(40,105,80,0.04)"></i><i style="left:153px;top:0px;background:rgba(40,105,80,0.02)"></i><i style="left:162px;top:0px;background:rgba(40,105,80,0.1)"></i><i style="left:171px;top:0px;background:rgba(40,105,80,0.14)"></i><i style="left:0px;top:9px;background:rgba(40,105,80,0.17)"></i><i style="left:9px;top:9px;background:rgba(40,105,80,0.22)"></i><i style="left:18px;top:9px;background:rgba(40,105,80,0.22)"></i><i style="left:27px;top:9px;background:rgba(40,105,80,0.12)"></i><i style="left:36px;top:9px;background:rgba(40,105,80,0.17)"></i><i style="left:45px;top:9px;background:rgba(40,105,80,0.27)"></i><i style="left:54px;top:9px;background:rgba(40,105,80,0.32)"></i><i style="left:63px;top:9px;background:rgba(40,105,80,0.22)"></i><i style="left:72px;top:9px;background:rgba(40,105,80,0.32)"></i><i style="left:81px;top:9px;background:rgba(40,105,80,0.32)"></i><i style="left:90px;top:9px;background:rgba(40,105,80,0.22)"></i><i style="left:99px;top:9px;background:rgba(40,105,80,0.17)"></i><i style="left:108px;top:9px;background:rgba(40,105,80,0.38)"></i><i style="left:117px;top:9px;background:rgba(40,105,80,0.32)"></i><i style="left:126px;top:9px;background:rgba(40,105,80,0.32)"></i><i style="left:135px;top:9px;background:rgba(40,105,80,0.38)"></i><i style="left:144px;top:9px;background:rgba(40,105,80,0.38)"></i><i style="left:153px;top:9px;background:rgba(40,105,80,0.38)"></i><i style="left:162px;top:9px;background:rgba(40,105,80,0.12)"></i><i style="left:171px;top:9px;background:rgba(40,105,80,0.27)"></i></div>
<div class="mz" style="left:831px;top:472.3px;width:135px"><i style="left:0px;top:0px;background:rgba(40,105,80,0.2)"></i><i style="left:9px;top:0px;background:rgba(40,105,80,0.14)"></i><i style="left:18px;top:0px;background:rgba(40,105,80,0.1)"></i><i style="left:27px;top:0px;background:rgba(40,105,80,0.1)"></i><i style="left:36px;top:0px;background:rgba(40,105,80,0.1)"></i><i style="left:45px;top:0px;background:rgba(40,105,80,0.1)"></i><i style="left:54px;top:0px;background:rgba(40,105,80,0.02)"></i><i style="left:63px;top:0px;background:rgba(40,105,80,0.1)"></i><i style="left:72px;top:0px;background:rgba(40,105,80,0.2)"></i><i style="left:81px;top:0px;background:rgba(40,105,80,0.1)"></i><i style="left:90px;top:0px;background:rgba(40,105,80,0.02)"></i><i style="left:99px;top:0px;background:rgba(40,105,80,0.04)"></i><i style="left:108px;top:0px;background:rgba(40,105,80,0.02)"></i><i style="left:117px;top:0px;background:rgba(40,105,80,0.04)"></i><i style="left:126px;top:0px;background:rgba(40,105,80,0.1)"></i><i style="left:0px;top:9px;background:rgba(40,105,80,0.17)"></i><i style="left:9px;top:9px;background:rgba(40,105,80,0.12)"></i><i style="left:18px;top:9px;background:rgba(40,105,80,0.22)"></i><i style="left:27px;top:9px;background:rgba(40,105,80,0.32)"></i><i style="left:36px;top:9px;background:rgba(40,105,80,0.12)"></i><i style="left:45px;top:9px;background:rgba(40,105,80,0.12)"></i><i style="left:54px;top:9px;background:rgba(40,105,80,0.12)"></i><i style="left:63px;top:9px;background:rgba(40,105,80,0.32)"></i><i style="left:72px;top:9px;background:rgba(40,105,80,0.17)"></i><i style="left:81px;top:9px;background:rgba(40,105,80,0.32)"></i><i style="left:90px;top:9px;background:rgba(40,105,80,0.12)"></i><i style="left:99px;top:9px;background:rgba(40,105,80,0.22)"></i><i style="left:108px;top:9px;background:rgba(40,105,80,0.32)"></i><i style="left:117px;top:9px;background:rgba(40,105,80,0.12)"></i><i style="left:126px;top:9px;background:rgba(40,105,80,0.12)"></i></div>
<div class="t" style="left:1080.5px;top:472.23px;font-size:14px;color:#174f36;letter-spacing:0.1px;-webkit-text-stroke:0.25px #174f36">2025-04-25</div>
<div class="t" style="left:1233.3px;top:472.23px;font-size:14px;color:#174f36;letter-spacing:0.15px;-webkit-text-stroke:0.25px #174f36">2025-05-25</div>
<div style="position:absolute;left:1443px;top:466.5px;width:100px;height:25.8px;background:#c3cc18;border-radius:4px"></div>
<div class="t" style="left:1477.5px;top:472.52px;font-size:12px;color:#fff;font-weight:700;letter-spacing:-0.15px;">Open</div>
<svg style="position:absolute;left:1797px;top:471.3px" width="20" height="16" viewBox="0 0 20 16"><circle cx="10" cy="8" r="2.2" fill="none" stroke="#6d6a7d" stroke-width="1.3"/><path d="M2.6 8 Q6 2.8 10 2.8 Q14 2.8 17.4 8 Q14 13.2 10 13.2 Q6 13.2 2.6 8 Z" fill="none" stroke="#6d6a7d" stroke-width="1.3" stroke-linejoin="round"/></svg>
<div style="position:absolute;left:281px;top:567.1px;width:1604px;height:1px;background:#e8e7ec"></div>
<div class="t" style="left:309.5px;top:530.69px;font-size:14px;color:#174f36;-webkit-text-stroke:0.25px #174f36">1077</div>
<div class="mz" style="left:418px;top:530.7px;width:297px"><i style="left:0px;top:0px;background:rgba(40,105,80,0.04)"></i><i style="left:9px;top:0px;background:rgba(40,105,80,0.14)"></i><i style="left:18px;top:0px;background:rgba(40,105,80,0.1)"></i><i style="left:27px;top:0px;background:rgba(40,105,80,0.04)"></i><i style="left:36px;top:0px;background:rgba(40,105,80,0.2)"></i><i style="left:45px;top:0px;background:rgba(40,105,80,0.07)"></i><i style="left:54px;top:0px;background:rgba(40,105,80,0.07)"></i><i style="left:63px;top:0px;background:rgba(40,105,80,0.14)"></i><i style="left:72px;top:0px;background:rgba(40,105,80,0.07)"></i><i style="left:81px;top:0px;background:rgba(40,105,80,0.1)"></i><i style="left:90px;top:0px;background:rgba(40,105,80,0.02)"></i><i style="left:99px;top:0px;background:rgba(40,105,80,0.02)"></i><i style="left:108px;top:0px;background:rgba(40,105,80,0.1)"></i><i style="left:117px;top:0px;background:rgba(40,105,80,0.1)"></i><i style="left:126px;top:0px;background:rgba(40,105,80,0.1)"></i><i style="left:135px;top:0px;background:rgba(40,105,80,0.1)"></i><i style="left:144px;top:0px;background:rgba(40,105,80,0.07)"></i><i style="left:153px;top:0px;background:rgba(40,105,80,0.02)"></i><i style="left:162px;top:0px;background:rgba(40,105,80,0.04)"></i><i style="left:171px;top:0px;background:rgba(40,105,80,0.02)"></i><i style="left:180px;top:0px;background:rgba(40,105,80,0.2)"></i><i style="left:189px;top:0px;background:rgba(40,105,80,0.07)"></i><i style="left:198px;top:0px;background:rgba(40,105,80,0.2)"></i><i style="left:207px;top:0px;background:rgba(40,105,80,0.07)"></i><i style="left:216px;top:0px;background:rgba(40,105,80,0.1)"></i><i style="left:225px;top:0px;background:rgba(40,105,80,0.2)"></i><i style="left:234px;top:0px;background:rgba(40,105,80,0.04)"></i><i style="left:243px;top:0px;background:rgba(40,105,80,0.14)"></i><i style="left:252px;top:0px;background:rgba(40,105,80,0.02)"></i><i style="left:261px;top:0px;background:rgba(40,105,80,0.04)"></i><i style="left:270px;top:0px;background:rgba(40,105,80,0.14)"></i><i style="left:279px;top:0px;background:rgba(40,105,80,0.07)"></i><i style="left:288px;top:0px;background:rgba(40,105,80,0.04)"></i><i style="left:0px;top:9px;background:rgba(40,105,80,0.38)"></i><i style="left:9px;top:9px;background:rgba(40,105,80,0.32)"></i><i style="left:18px;top:9px;background:rgba(40,105,80,0.12)"></i><i style="left:27px;top:9px;background:rgba(40,105,80,0.32)"></i><i style="left:36px;top:9px;background:rgba(40,105,80,0.22)"></i><i style="left:45px;top:9px;background:rgba(40,105,80,0.38)"></i><i style="left:54px;top:9px;background:rgba(40,105,80,0.12)"></i><i style="left:63px;top:9px;background:rgba(40,105,80,0.38)"></i><i style="left:72px;top:9px;background:rgba(40,105,80,0.22)"></i><i style="left:81px;top:9px;background:rgba(40,105,80,0.32)"></i><i style="left:90px;top:9px;background:rgba(40,105,80,0.22)"></i><i style="left:99px;top:9px;background:rgba(40,105,80,0.17)"></i><i style="left:108px;top:9px;background:rgba(40,105,80,0.22)"></i><i style="left:117px;top:9px;background:rgba(40,105,80,0.17)"></i><i style="left:126px;top:9px;background:rgba(40,105,80,0.32)"></i><i style="left:135px;top:9px;background:rgba(40,105,80,0.32)"></i><i style="left:144px;top:9px;background:rgba(40,105,80,0.32)"></i><i style="left:153px;top:9px;background:rgba(40,105,80,0.22)"></i><i style="left:162px;top:9px;background:rgba(40,105,80,0.38)"></i><i style="left:171px;top:9px;background:rgba(40,105,80,0.17)"></i><i style="left:180px;top:9px;background:rgba(40,105,80,0.32)"></i><i style="left:189px;top:9px;background:rgba(40,105,80,0.17)"></i><i style="left:198px;top:9px;background:rgba(40,105,80,0.17)"></i><i style="left:207px;top:9px;background:rgba(40,105,80,0.27)"></i><i style="left:216px;top:9px;background:rgba(40,105,80,0.38)"></i><i style="left:225px;top:9px;background:rgba(40,105,80,0.17)"></i><i style="left:234px;top:9px;background:rgba(40,105,80,0.17)"></i><i style="left:243px;top:9px;background:rgba(40,105,80,0.32)"></i><i style="left:252px;top:9px;background:rgba(40,105,80,0.27)"></i><i style="left:261px;top:9px;background:rgba(40,105,80,0.22)"></i><i style="left:270px;top:9px;background:rgba(40,105,80,0.38)"></i><i style="left:279px;top:9px;background:rgba(40,105,80,0.12)"></i><i style="left:288px;top:9px;background:rgba(40,105,80,0.12)"></i></div>
<div class="mz" style="left:831px;top:530.7px;width:135px"><i style="left:0px;top:0px;background:rgba(40,105,80,0.07)"></i><i style="left:9px;top:0px;background:rgba(40,105,80,0.1)"></i><i style="left:18px;top:0px;background:rgba(40,105,80,0.07)"></i><i style="left:27px;top:0px;background:rgba(40,105,80,0.04)"></i><i style="left:36px;top:0px;background:rgba(40,105,80,0.2)"></i><i style="left:45px;top:0px;background:rgba(40,105,80,0.14)"></i><i style="left:54px;top:0px;background:rgba(40,105,80,0.07)"></i><i style="left:63px;top:0px;background:rgba(40,105,80,0.1)"></i><i style="left:72px;top:0px;background:rgba(40,105,80,0.2)"></i><i style="left:81px;top:0px;background:rgba(40,105,80,0.07)"></i><i style="left:90px;top:0px;background:rgba(40,105,80,0.07)"></i><i style="left:99px;top:0px;background:rgba(40,105,80,0.02)"></i><i style="left:108px;top:0px;background:rgba(40,105,80,0.04)"></i><i style="left:117px;top:0px;background:rgba(40,105,80,0.02)"></i><i style="left:126px;top:0px;background:rgba(40,105,80,0.04)"></i><i style="left:0px;top:9px;background:rgba(40,105,80,0.27)"></i><i style="left:9px;top:9px;background:rgba(40,105,80,0.17)"></i><i style="left:18px;top:9px;background:rgba(40,105,80,0.22)"></i><i style="left:27px;top:9px;background:rgba(40,105,80,0.17)"></i><i style="left:36px;top:9px;background:rgba(40,105,80,0.27)"></i><i style="left:45px;top:9px;background:rgba(40,105,80,0.32)"></i><i style="left:54px;top:9px;background:rgba(40,105,80,0.32)"></i><i style="left:63px;top:9px;background:rgba(40,105,80,0.12)"></i><i style="left:72px;top:9px;background:rgba(40,105,80,0.27)"></i><i style="left:81px;top:9px;background:rgba(40,105,80,0.38)"></i><i style="left:90px;top:9px;background:rgba(40,105,80,0.22)"></i><i style="left:99px;top:9px;background:rgba(40,105,80,0.38)"></i><i style="left:108px;top:9px;background:rgba(40,105,80,0.12)"></i><i style="left:117px;top:9px;background:rgba(40,105,80,0.38)"></i><i style="left:126px;top:9px;background:rgba(40,105,80,0.12)"></i></div>
<div class="t" style="left:1080.5px;top:530.69px;font-size:14px;color:#174f36;letter-spacing:0.1px;-webkit-text-stroke:0.25px #174f36">2025-04-23</div>
<div class="t" style="left:1233.3px;top:530.69px;font-size:14px;color:#174f36;letter-spacing:0.15px;-webkit-text-stroke:0.25px #174f36">2025-05-23</div>
<div style="position:absolute;left:1443px;top:524.9px;width:100px;height:25.8px;background:#c3cc18;border-radius:4px"></div>
<div class="t" style="left:1477.5px;top:530.98px;font-size:12px;color:#fff;font-weight:700;letter-spacing:-0.15px;">Open</div>
<svg style="position:absolute;left:1797px;top:529.7px" width="20" height="16" viewBox="0 0 20 16"><circle cx="10" cy="8" r="2.2" fill="none" stroke="#6d6a7d" stroke-width="1.3"/><path d="M2.6 8 Q6 2.8 10 2.8 Q14 2.8 17.4 8 Q14 13.2 10 13.2 Q6 13.2 2.6 8 Z" fill="none" stroke="#6d6a7d" stroke-width="1.3" stroke-linejoin="round"/></svg>
<div style="position:absolute;left:281px;top:625.6px;width:1604px;height:1px;background:#e8e7ec"></div>
<div class="t" style="left:309.5px;top:589.15px;font-size:14px;color:#174f36;-webkit-text-stroke:0.25px #174f36">1074</div>
<div class="mz" style="left:418px;top:589.2px;width:135px"><i style="left:0px;top:0px;background:rgba(40,105,80,0.1)"></i><i style="left:9px;top:0px;background:rgba(40,105,80,0.2)"></i><i style="left:18px;top:0px;background:rgba(40,105,80,0.04)"></i><i style="left:27px;top:0px;background:rgba(40,105,80,0.1)"></i><i style="left:36px;top:0px;background:rgba(40,105,80,0.04)"></i><i style="left:45px;top:0px;background:rgba(40,105,80,0.1)"></i><i style="left:54px;top:0px;background:rgba(40,105,80,0.2)"></i><i style="left:63px;top:0px;background:rgba(40,105,80,0.07)"></i><i style="left:72px;top:0px;background:rgba(40,105,80,0.02)"></i><i style="left:81px;top:0px;background:rgba(40,105,80,0.2)"></i><i style="left:90px;top:0px;background:rgba(40,105,80,0.1)"></i><i style="left:99px;top:0px;background:rgba(40,105,80,0.1)"></i><i style="left:108px;top:0px;background:rgba(40,105,80,0.1)"></i><i style="left:117px;top:0px;background:rgba(40,105,80,0.2)"></i><i style="left:126px;top:0px;background:rgba(40,105,80,0.02)"></i><i style="left:0px;top:9px;background:rgba(40,105,80,0.38)"></i><i style="left:9px;top:9px;background:rgba(40,105,80,0.17)"></i><i style="left:18px;top:9px;background:rgba(40,105,80,0.17)"></i><i style="left:27px;top:9px;background:rgba(40,105,80,0.17)"></i><i style="left:36px;top:9px;background:rgba(40,105,80,0.12)"></i><i style="left:45px;top:9px;background:rgba(40,105,80,0.17)"></i><i style="left:54px;top:9px;background:rgba(40,105,80,0.32)"></i><i style="left:63px;top:9px;background:rgba(40,105,80,0.27)"></i><i style="left:72px;top:9px;background:rgba(40,105,80,0.38)"></i><i style="left:81px;top:9px;background:rgba(40,105,80,0.17)"></i><i style="left:90px;top:9px;background:rgba(40,105,80,0.32)"></i><i style="left:99px;top:9px;background:rgba(40,105,80,0.32)"></i><i style="left:108px;top:9px;background:rgba(40,105,80,0.27)"></i><i style="left:117px;top:9px;background:rgba(40,105,80,0.38)"></i><i style="left:126px;top:9px;background:rgba(40,105,80,0.22)"></i></div>
<div class="mz" style="left:831px;top:589.2px;width:153px"><i style="left:0px;top:0px;background:rgba(40,105,80,0.04)"></i><i style="left:9px;top:0px;background:rgba(40,105,80,0.14)"></i><i style="left:18px;top:0px;background:rgba(40,105,80,0.14)"></i><i style="left:27px;top:0px;background:rgba(40,105,80,0.04)"></i><i style="left:36px;top:0px;background:rgba(40,105,80,0.02)"></i><i style="left:45px;top:0px;background:rgba(40,105,80,0.02)"></i><i style="left:54px;top:0px;background:rgba(40,105,80,0.2)"></i><i style="left:63px;top:0px;background:rgba(40,105,80,0.2)"></i><i style="left:72px;top:0px;background:rgba(40,105,80,0.02)"></i><i style="left:81px;top:0px;background:rgba(40,105,80,0.14)"></i><i style="left:90px;top:0px;background:rgba(40,105,80,0.2)"></i><i style="left:99px;top:0px;background:rgba(40,105,80,0.04)"></i><i style="left:108px;top:0px;background:rgba(40,105,80,0.1)"></i><i style="left:117px;top:0px;background:rgba(40,105,80,0.04)"></i><i style="left:126px;top:0px;background:rgba(40,105,80,0.04)"></i><i style="left:135px;top:0px;background:rgba(40,105,80,0.02)"></i><i style="left:144px;top:0px;background:rgba(40,105,80,0.07)"></i><i style="left:0px;top:9px;background:rgba(40,105,80,0.17)"></i><i style="left:9px;top:9px;background:rgba(40,105,80,0.22)"></i><i style="left:18px;top:9px;background:rgba(40,105,80,0.32)"></i><i style="left:27px;top:9px;background:rgba(40,105,80,0.17)"></i><i style="left:36px;top:9px;background:rgba(40,105,80,0.32)"></i><i style="left:45px;top:9px;background:rgba(40,105,80,0.22)"></i><i style="left:54px;top:9px;background:rgba(40,105,80,0.22)"></i><i style="left:63px;top:9px;background:rgba(40,105,80,0.32)"></i><i style="left:72px;top:9px;background:rgba(40,105,80,0.27)"></i><i style="left:81px;top:9px;background:rgba(40,105,80,0.17)"></i><i style="left:90px;top:9px;background:rgba(40,105,80,0.12)"></i><i style="left:99px;top:9px;background:rgba(40,105,80,0.38)"></i><i style="left:108px;top:9px;background:rgba(40,105,80,0.22)"></i><i style="left:117px;top:9px;background:rgba(40,105,80,0.27)"></i><i style="left:126px;top:9px;background:rgba(40,105,80,0.38)"></i><i style="left:135px;top:9px;background:rgba(40,105,80,0.32)"></i><i style="left:144px;top:9px;background:rgba(40,105,80,0.32)"></i></div>
<div class="t" style="left:1080.5px;top:589.15px;font-size:14px;color:#174f36;letter-spacing:0.1px;-webkit-text-stroke:0.25px #174f36">2025-04-22</div>
<div class="t" style="left:1233.3px;top:589.15px;font-size:14px;color:#174f36;letter-spacing:0.15px;-webkit-text-stroke:0.25px #174f36">2025-05-22</div>
<div style="position:absolute;left:1443px;top:583.4px;width:100px;height:25.8px;background:#c3cc18;border-radius:4px"></div>
<div class="t" style="left:1477.5px;top:589.44px;font-size:12px;color:#fff;font-weight:700;letter-spacing:-0.15px;">Open</div>
<svg style="position:absolute;left:1797px;top:588.2px" width="20" height="16" viewBox="0 0 20 16"><circle cx="10" cy="8" r="2.2" fill="none" stroke="#6d6a7d" stroke-width="1.3"/><path d="M2.6 8 Q6 2.8 10 2.8 Q14 2.8 17.4 8 Q14 13.2 10 13.2 Q6 13.2 2.6 8 Z" fill="none" stroke="#6d6a7d" stroke-width="1.3" stroke-linejoin="round"/></svg>
<div style="position:absolute;left:281px;top:684.1px;width:1604px;height:1px;background:#e8e7ec"></div>
<div class="t" style="left:309.5px;top:647.61px;font-size:14px;color:#174f36;-webkit-text-stroke:0.25px #174f36">1070</div>
<div class="mz" style="left:418px;top:647.7px;width:243px"><i style="left:0px;top:0px;background:rgba(40,105,80,0.1)"></i><i style="left:9px;top:0px;background:rgba(40,105,80,0.14)"></i><i style="left:18px;top:0px;background:rgba(40,105,80,0.04)"></i><i style="left:27px;top:0px;background:rgba(40,105,80,0.14)"></i><i style="left:36px;top:0px;background:rgba(40,105,80,0.04)"></i><i style="left:45px;top:0px;background:rgba(40,105,80,0.14)"></i><i style="left:54px;top:0px;background:rgba(40,105,80,0.14)"></i><i style="left:63px;top:0px;background:rgba(40,105,80,0.02)"></i><i style="left:72px;top:0px;background:rgba(40,105,80,0.1)"></i><i style="left:81px;top:0px;background:rgba(40,105,80,0.04)"></i><i style="left:90px;top:0px;background:rgba(40,105,80,0.14)"></i><i style="left:99px;top:0px;background:rgba(40,105,80,0.02)"></i><i style="left:108px;top:0px;background:rgba(40,105,80,0.04)"></i><i style="left:117px;top:0px;background:rgba(40,105,80,0.04)"></i><i style="left:126px;top:0px;background:rgba(40,105,80,0.04)"></i><i style="left:135px;top:0px;background:rgba(40,105,80,0.1)"></i><i style="left:144px;top:0px;background:rgba(40,105,80,0.14)"></i><i style="left:153px;top:0px;background:rgba(40,105,80,0.2)"></i><i style="left:162px;top:0px;background:rgba(40,105,80,0.02)"></i><i style="left:171px;top:0px;background:rgba(40,105,80,0.14)"></i><i style="left:180px;top:0px;background:rgba(40,105,80,0.02)"></i><i style="left:189px;top:0px;background:rgba(40,105,80,0.07)"></i><i style="left:198px;top:0px;background:rgba(40,105,80,0.2)"></i><i style="left:207px;top:0px;background:rgba(40,105,80,0.14)"></i><i style="left:216px;top:0px;background:rgba(40,105,80,0.14)"></i><i style="left:225px;top:0px;background:rgba(40,105,80,0.14)"></i><i style="left:234px;top:0px;background:rgba(40,105,80,0.1)"></i><i style="left:0px;top:9px;background:rgba(40,105,80,0.12)"></i><i style="left:9px;top:9px;background:rgba(40,105,80,0.32)"></i><i style="left:18px;top:9px;background:rgba(40,105,80,0.12)"></i><i style="left:27px;top:9px;background:rgba(40,105,80,0.17)"></i><i style="left:36px;top:9px;background:rgba(40,105,80,0.17)"></i><i style="left:45px;top:9px;background:rgba(40,105,80,0.22)"></i><i style="left:54px;top:9px;background:rgba(40,105,80,0.12)"></i><i style="left:63px;top:9px;background:rgba(40,105,80,0.12)"></i><i style="left:72px;top:9px;background:rgba(40,105,80,0.32)"></i><i style="left:81px;top:9px;background:rgba(40,105,80,0.27)"></i><i style="left:90px;top:9px;background:rgba(40,105,80,0.32)"></i><i style="left:99px;top:9px;background:rgba(40,105,80,0.12)"></i><i style="left:108px;top:9px;background:rgba(40,105,80,0.12)"></i><i style="left:117px;top:9px;background:rgba(40,105,80,0.27)"></i><i style="left:126px;top:9px;background:rgba(40,105,80,0.22)"></i><i style="left:135px;top:9px;background:rgba(40,105,80,0.32)"></i><i style="left:144px;top:9px;background:rgba(40,105,80,0.32)"></i><i style="left:153px;top:9px;background:rgba(40,105,80,0.32)"></i><i style="left:162px;top:9px;background:rgba(40,105,80,0.32)"></i><i style="left:171px;top:9px;background:rgba(40,105,80,0.17)"></i><i style="left:180px;top:9px;background:rgba(40,105,80,0.38)"></i><i style="left:189px;top:9px;background:rgba(40,105,80,0.22)"></i><i style="left:198px;top:9px;background:rgba(40,105,80,0.27)"></i><i style="left:207px;top:9px;background:rgba(40,105,80,0.32)"></i><i style="left:216px;top:9px;background:rgba(40,105,80,0.32)"></i><i style="left:225px;top:9px;background:rgba(40,105,80,0.27)"></i><i style="left:234px;top:9px;background:rgba(40,105,80,0.32)"></i></div>
<div class="mz" style="left:831px;top:647.7px;width:144px"><i style="left:0px;top:0px;background:rgba(40,105,80,0.04)"></i><i style="left:9px;top:0px;background:rgba(40,105,80,0.2)"></i><i style="left:18px;top:0px;background:rgba(40,105,80,0.14)"></i><i style="left:27px;top:0px;background:rgba(40,105,80,0.07)"></i><i style="left:36px;top:0px;background:rgba(40,105,80,0.14)"></i><i style="left:45px;top:0px;background:rgba(40,105,80,0.04)"></i><i style="left:54px;top:0px;background:rgba(40,105,80,0.1)"></i><i style="left:63px;top:0px;background:rgba(40,105,80,0.04)"></i><i style="left:72px;top:0px;background:rgba(40,105,80,0.1)"></i><i style="left:81px;top:0px;background:rgba(40,105,80,0.02)"></i><i style="left:90px;top:0px;background:rgba(40,105,80,0.1)"></i><i style="left:99px;top:0px;background:rgba(40,105,80,0.1)"></i><i style="left:108px;top:0px;background:rgba(40,105,80,0.07)"></i><i style="left:117px;top:0px;background:rgba(40,105,80,0.02)"></i><i style="left:126px;top:0px;background:rgba(40,105,80,0.2)"></i><i style="left:135px;top:0px;background:rgba(40,105,80,0.04)"></i><i style="left:0px;top:9px;background:rgba(40,105,80,0.27)"></i><i style="left:9px;top:9px;background:rgba(40,105,80,0.12)"></i><i style="left:18px;top:9px;background:rgba(40,105,80,0.17)"></i><i style="left:27px;top:9px;background:rgba(40,105,80,0.38)"></i><i style="left:36px;top:9px;background:rgba(40,105,80,0.22)"></i><i style="left:45px;top:9px;background:rgba(40,105,80,0.12)"></i><i style="left:54px;top:9px;background:rgba(40,105,80,0.17)"></i><i style="left:63px;top:9px;background:rgba(40,105,80,0.38)"></i><i style="left:72px;top:9px;background:rgba(40,105,80,0.38)"></i><i style="left:81px;top:9px;background:rgba(40,105,80,0.38)"></i><i style="left:90px;top:9px;background:rgba(40,105,80,0.22)"></i><i style="left:99px;top:9px;background:rgba(40,105,80,0.17)"></i><i style="left:108px;top:9px;background:rgba(40,105,80,0.22)"></i><i style="left:117px;top:9px;background:rgba(40,105,80,0.17)"></i><i style="left:126px;top:9px;background:rgba(40,105,80,0.27)"></i><i style="left:135px;top:9px;background:rgba(40,105,80,0.17)"></i></div>
<div class="t" style="left:1080.5px;top:647.61px;font-size:14px;color:#174f36;letter-spacing:0.1px;-webkit-text-stroke:0.25px #174f36">2025-04-21</div>
<div class="t" style="left:1233.3px;top:647.61px;font-size:14px;color:#174f36;letter-spacing:0.15px;-webkit-text-stroke:0.25px #174f36">2025-05-21</div>
<div style="position:absolute;left:1443px;top:641.9px;width:100px;height:25.8px;background:#c3cc18;border-radius:4px"></div>
<div class="t" style="left:1477.5px;top:647.90px;font-size:12px;color:#fff;font-weight:700;letter-spacing:-0.15px;">Open</div>
<svg style="position:absolute;left:1797px;top:646.7px" width="20" height="16" viewBox="0 0 20 16"><circle cx="10" cy="8" r="2.2" fill="none" stroke="#6d6a7d" stroke-width="1.3"/><path d="M2.6 8 Q6 2.8 10 2.8 Q14 2.8 17.4 8 Q14 13.2 10 13.2 Q6 13.2 2.6 8 Z" fill="none" stroke="#6d6a7d" stroke-width="1.3" stroke-linejoin="round"/></svg>
<div style="position:absolute;left:281px;top:742.6px;width:1604px;height:1px;background:#e8e7ec"></div>
<div class="t" style="left:309.5px;top:706.07px;font-size:14px;color:#174f36;-webkit-text-stroke:0.25px #174f36">1069</div>
<div class="mz" style="left:418px;top:706.1px;width:153px"><i style="left:0px;top:0px;background:rgba(40,105,80,0.2)"></i><i style="left:9px;top:0px;background:rgba(40,105,80,0.02)"></i><i style="left:18px;top:0px;background:rgba(40,105,80,0.1)"></i><i style="left:27px;top:0px;background:rgba(40,105,80,0.1)"></i><i style="left:36px;top:0px;background:rgba(40,105,80,0.04)"></i><i style="left:45px;top:0px;background:rgba(40,105,80,0.2)"></i><i style="left:54px;top:0px;background:rgba(40,105,80,0.04)"></i><i style="left:63px;top:0px;background:rgba(40,105,80,0.04)"></i><i style="left:72px;top:0px;background:rgba(40,105,80,0.2)"></i><i style="left:81px;top:0px;background:rgba(40,105,80,0.1)"></i><i style="left:90px;top:0px;background:rgba(40,105,80,0.14)"></i><i style="left:99px;top:0px;background:rgba(40,105,80,0.1)"></i><i style="left:108px;top:0px;background:rgba(40,105,80,0.07)"></i><i style="left:117px;top:0px;background:rgba(40,105,80,0.1)"></i><i style="left:126px;top:0px;background:rgba(40,105,80,0.04)"></i><i style="left:135px;top:0px;background:rgba(40,105,80,0.07)"></i><i style="left:144px;top:0px;background:rgba(40,105,80,0.07)"></i><i style="left:0px;top:9px;background:rgba(40,105,80,0.12)"></i><i style="left:9px;top:9px;background:rgba(40,105,80,0.38)"></i><i style="left:18px;top:9px;background:rgba(40,105,80,0.22)"></i><i style="left:27px;top:9px;background:rgba(40,105,80,0.12)"></i><i style="left:36px;top:9px;background:rgba(40,105,80,0.22)"></i><i style="left:45px;top:9px;background:rgba(40,105,80,0.32)"></i><i style="left:54px;top:9px;background:rgba(40,105,80,0.27)"></i><i style="left:63px;top:9px;background:rgba(40,105,80,0.27)"></i><i style="left:72px;top:9px;background:rgba(40,105,80,0.38)"></i><i style="left:81px;top:9px;background:rgba(40,105,80,0.12)"></i><i style="left:90px;top:9px;background:rgba(40,105,80,0.27)"></i><i style="left:99px;top:9px;background:rgba(40,105,80,0.22)"></i><i style="left:108px;top:9px;background:rgba(40,105,80,0.32)"></i><i style="left:117px;top:9px;background:rgba(40,105,80,0.32)"></i><i style="left:126px;top:9px;background:rgba(40,105,80,0.22)"></i><i style="left:135px;top:9px;background:rgba(40,105,80,0.32)"></i><i style="left:144px;top:9px;background:rgba(40,105,80,0.12)"></i></div>
<div class="mz" style="left:831px;top:706.1px;width:135px"><i style="left:0px;top:0px;background:rgba(40,105,80,0.02)"></i><i style="left:9px;top:0px;background:rgba(40,105,80,0.04)"></i><i style="left:18px;top:0px;background:rgba(40,105,80,0.02)"></i><i style="left:27px;top:0px;background:rgba(40,105,80,0.02)"></i><i style="left:36px;top:0px;background:rgba(40,105,80,0.07)"></i><i style="left:45px;top:0px;background:rgba(40,105,80,0.07)"></i><i style="left:54px;top:0px;background:rgba(40,105,80,0.02)"></i><i style="left:63px;top:0px;background:rgba(40,105,80,0.04)"></i><i style="left:72px;top:0px;background:rgba(40,105,80,0.07)"></i><i style="left:81px;top:0px;background:rgba(40,105,80,0.04)"></i><i style="left:90px;top:0px;background:rgba(40,105,80,0.1)"></i><i style="left:99px;top:0px;background:rgba(40,105,80,0.2)"></i><i style="left:108px;top:0px;background:rgba(40,105,80,0.07)"></i><i style="left:117px;top:0px;background:rgba(40,105,80,0.1)"></i><i style="left:126px;top:0px;background:rgba(40,105,80,0.04)"></i><i style="left:0px;top:9px;background:rgba(40,105,80,0.32)"></i><i style="left:9px;top:9px;background:rgba(40,105,80,0.32)"></i><i style="left:18px;top:9px;background:rgba(40,105,80,0.32)"></i><i style="left:27px;top:9px;background:rgba(40,105,80,0.27)"></i><i style="left:36px;top:9px;background:rgba(40,105,80,0.38)"></i><i style="left:45px;top:9px;background:rgba(40,105,80,0.22)"></i><i style="left:54px;top:9px;background:rgba(40,105,80,0.12)"></i><i style="left:63px;top:9px;background:rgba(40,105,80,0.22)"></i><i style="left:72px;top:9px;background:rgba(40,105,80,0.12)"></i><i style="left:81px;top:9px;background:rgba(40,105,80,0.38)"></i><i style="left:90px;top:9px;background:rgba(40,105,80,0.17)"></i><i style="left:99px;top:9px;background:rgba(40,105,80,0.27)"></i><i style="left:108px;top:9px;background:rgba(40,105,80,0.12)"></i><i style="left:117px;top:9px;background:rgba(40,105,80,0.22)"></i><i style="left:126px;top:9px;background:rgba(40,105,80,0.12)"></i></div>
<div class="t" style="left:1080.5px;top:706.07px;font-size:14px;color:#174f36;letter-spacing:0.1px;-webkit-text-stroke:0.25px #174f36">2025-04-21</div>
<div class="t" style="left:1233.3px;top:706.07px;font-size:14px;color:#174f36;letter-spacing:0.15px;-webkit-text-stroke:0.25px #174f36">2025-05-21</div>
<div style="position:absolute;left:1443px;top:700.3px;width:100px;height:25.8px;background:#c3cc18;border-radius:4px"></div>
<div class="t" style="left:1477.5px;top:706.36px;font-size:12px;color:#fff;font-weight:700;letter-spacing:-0.15px;">Open</div>
<svg style="position:absolute;left:1797px;top:705.1px" width="20" height="16" viewBox="0 0 20 16"><circle cx="10" cy="8" r="2.2" fill="none" stroke="#6d6a7d" stroke-width="1.3"/><path d="M2.6 8 Q6 2.8 10 2.8 Q14 2.8 17.4 8 Q14 13.2 10 13.2 Q6 13.2 2.6 8 Z" fill="none" stroke="#6d6a7d" stroke-width="1.3" stroke-linejoin="round"/></svg>
<div style="position:absolute;left:281px;top:801.1px;width:1604px;height:1px;background:#e8e7ec"></div>
<div class="t" style="left:309.5px;top:764.53px;font-size:14px;color:#174f36;-webkit-text-stroke:0.25px #174f36">1065</div>
<div class="mz" style="left:418px;top:764.6px;width:117px"><i style="left:0px;top:0px;background:rgba(40,105,80,0.2)"></i><i style="left:9px;top:0px;background:rgba(40,105,80,0.02)"></i><i style="left:18px;top:0px;background:rgba(40,105,80,0.07)"></i><i style="left:27px;top:0px;background:rgba(40,105,80,0.02)"></i><i style="left:36px;top:0px;background:rgba(40,105,80,0.14)"></i><i style="left:45px;top:0px;background:rgba(40,105,80,0.04)"></i><i style="left:54px;top:0px;background:rgba(40,105,80,0.02)"></i><i style="left:63px;top:0px;background:rgba(40,105,80,0.07)"></i><i style="left:72px;top:0px;background:rgba(40,105,80,0.02)"></i><i style="left:81px;top:0px;background:rgba(40,105,80,0.1)"></i><i style="left:90px;top:0px;background:rgba(40,105,80,0.02)"></i><i style="left:99px;top:0px;background:rgba(40,105,80,0.07)"></i><i style="left:108px;top:0px;background:rgba(40,105,80,0.14)"></i><i style="left:0px;top:9px;background:rgba(40,105,80,0.27)"></i><i style="left:9px;top:9px;background:rgba(40,105,80,0.22)"></i><i style="left:18px;top:9px;background:rgba(40,105,80,0.32)"></i><i style="left:27px;top:9px;background:rgba(40,105,80,0.17)"></i><i style="left:36px;top:9px;background:rgba(40,105,80,0.12)"></i><i style="left:45px;top:9px;background:rgba(40,105,80,0.32)"></i><i style="left:54px;top:9px;background:rgba(40,105,80,0.38)"></i><i style="left:63px;top:9px;background:rgba(40,105,80,0.17)"></i><i style="left:72px;top:9px;background:rgba(40,105,80,0.12)"></i><i style="left:81px;top:9px;background:rgba(40,105,80,0.17)"></i><i style="left:90px;top:9px;background:rgba(40,105,80,0.22)"></i><i style="left:99px;top:9px;background:rgba(40,105,80,0.12)"></i><i style="left:108px;top:9px;background:rgba(40,105,80,0.17)"></i></div>
<div class="mz" style="left:831px;top:764.6px;width:117px"><i style="left:0px;top:0px;background:rgba(40,105,80,0.04)"></i><i style="left:9px;top:0px;background:rgba(40,105,80,0.07)"></i><i style="left:18px;top:0px;background:rgba(40,105,80,0.2)"></i><i style="left:27px;top:0px;background:rgba(40,105,80,0.07)"></i><i style="left:36px;top:0px;background:rgba(40,105,80,0.14)"></i><i style="left:45px;top:0px;background:rgba(40,105,80,0.04)"></i><i style="left:54px;top:0px;background:rgba(40,105,80,0.07)"></i><i style="left:63px;top:0px;background:rgba(40,105,80,0.1)"></i><i style="left:72px;top:0px;background:rgba(40,105,80,0.14)"></i><i style="left:81px;top:0px;background:rgba(40,105,80,0.2)"></i><i style="left:90px;top:0px;background:rgba(40,105,80,0.04)"></i><i style="left:99px;top:0px;background:rgba(40,105,80,0.07)"></i><i style="left:108px;top:0px;background:rgba(40,105,80,0.07)"></i><i style="left:0px;top:9px;background:rgba(40,105,80,0.12)"></i><i style="left:9px;top:9px;background:rgba(40,105,80,0.22)"></i><i style="left:18px;top:9px;background:rgba(40,105,80,0.12)"></i><i style="left:27px;top:9px;background:rgba(40,105,80,0.12)"></i><i style="left:36px;top:9px;background:rgba(40,105,80,0.12)"></i><i style="left:45px;top:9px;background:rgba(40,105,80,0.38)"></i><i style="left:54px;top:9px;background:rgba(40,105,80,0.32)"></i><i style="left:63px;top:9px;background:rgba(40,105,80,0.32)"></i><i style="left:72px;top:9px;background:rgba(40,105,80,0.17)"></i><i style="left:81px;top:9px;background:rgba(40,105,80,0.32)"></i><i style="left:90px;top:9px;background:rgba(40,105,80,0.27)"></i><i style="left:99px;top:9px;background:rgba(40,105,80,0.17)"></i><i style="left:108px;top:9px;background:rgba(40,105,80,0.27)"></i></div>
<div class="t" style="left:1080.5px;top:764.53px;font-size:14px;color:#174f36;letter-spacing:0.1px;-webkit-text-stroke:0.25px #174f36">2025-04-20</div>
<div class="t" style="left:1233.3px;top:764.53px;font-size:14px;color:#174f36;letter-spacing:0.15px;-webkit-text-stroke:0.25px #174f36">2025-05-20</div>
<div style="position:absolute;left:1443px;top:758.8px;width:100px;height:25.8px;background:#c3cc18;border-radius:4px"></div>
<div class="t" style="left:1477.5px;top:764.82px;font-size:12px;color:#fff;font-weight:700;letter-spacing:-0.15px;">Open</div>
<svg style="position:absolute;left:1797px;top:763.6px" width="20" height="16" viewBox="0 0 20 16"><circle cx="10" cy="8" r="2.2" fill="none" stroke="#6d6a7d" stroke-width="1.3"/><path d="M2.6 8 Q6 2.8 10 2.8 Q14 2.8 17.4 8 Q14 13.2 10 13.2 Q6 13.2 2.6 8 Z" fill="none" stroke="#6d6a7d" stroke-width="1.3" stroke-linejoin="round"/></svg>
<div class="t" style="left:309.5px;top:822.99px;font-size:14px;color:#174f36;-webkit-text-stroke:0.25px #174f36">1062</div>
<div class="mz" style="left:418px;top:823.0px;width:198px"><i style="left:0px;top:0px;background:rgba(40,105,80,0.02)"></i><i style="left:9px;top:0px;background:rgba(40,105,80,0.2)"></i><i style="left:18px;top:0px;background:rgba(40,105,80,0.2)"></i><i style="left:27px;top:0px;background:rgba(40,105,80,0.1)"></i><i style="left:36px;top:0px;background:rgba(40,105,80,0.2)"></i><i style="left:45px;top:0px;background:rgba(40,105,80,0.1)"></i><i style="left:54px;top:0px;background:rgba(40,105,80,0.14)"></i><i style="left:63px;top:0px;background:rgba(40,105,80,0.1)"></i><i style="left:72px;top:0px;background:rgba(40,105,80,0.14)"></i><i style="left:81px;top:0px;background:rgba(40,105,80,0.07)"></i><i style="left:90px;top:0px;background:rgba(40,105,80,0.2)"></i><i style="left:99px;top:0px;background:rgba(40,105,80,0.04)"></i><i style="left:108px;top:0px;background:rgba(40,105,80,0.04)"></i><i style="left:117px;top:0px;background:rgba(40,105,80,0.07)"></i><i style="left:126px;top:0px;background:rgba(40,105,80,0.04)"></i><i style="left:135px;top:0px;background:rgba(40,105,80,0.2)"></i><i style="left:144px;top:0px;background:rgba(40,105,80,0.2)"></i><i style="left:153px;top:0px;background:rgba(40,105,80,0.2)"></i><i style="left:162px;top:0px;background:rgba(40,105,80,0.04)"></i><i style="left:171px;top:0px;background:rgba(40,105,80,0.1)"></i><i style="left:180px;top:0px;background:rgba(40,105,80,0.07)"></i><i style="left:189px;top:0px;background:rgba(40,105,80,0.02)"></i><i style="left:0px;top:9px;background:rgba(40,105,80,0.17)"></i><i style="left:9px;top:9px;background:rgba(40,105,80,0.12)"></i><i style="left:18px;top:9px;background:rgba(40,105,80,0.12)"></i><i style="left:27px;top:9px;background:rgba(40,105,80,0.38)"></i><i style="left:36px;top:9px;background:rgba(40,105,80,0.38)"></i><i style="left:45px;top:9px;background:rgba(40,105,80,0.22)"></i><i style="left:54px;top:9px;background:rgba(40,105,80,0.27)"></i><i style="left:63px;top:9px;background:rgba(40,105,80,0.17)"></i><i style="left:72px;top:9px;background:rgba(40,105,80,0.12)"></i><i style="left:81px;top:9px;background:rgba(40,105,80,0.12)"></i><i style="left:90px;top:9px;background:rgba(40,105,80,0.38)"></i><i style="left:99px;top:9px;background:rgba(40,105,80,0.27)"></i><i style="left:108px;top:9px;background:rgba(40,105,80,0.32)"></i><i style="left:117px;top:9px;background:rgba(40,105,80,0.38)"></i><i style="left:126px;top:9px;background:rgba(40,105,80,0.22)"></i><i style="left:135px;top:9px;background:rgba(40,105,80,0.32)"></i><i style="left:144px;top:9px;background:rgba(40,105,80,0.17)"></i><i style="left:153px;top:9px;background:rgba(40,105,80,0.38)"></i><i style="left:162px;top:9px;background:rgba(40,105,80,0.22)"></i><i style="left:171px;top:9px;background:rgba(40,105,80,0.12)"></i><i style="left:180px;top:9px;background:rgba(40,105,80,0.27)"></i><i style="left:189px;top:9px;background:rgba(40,105,80,0.17)"></i></div>
<div class="mz" style="left:831px;top:823.0px;width:135px"><i style="left:0px;top:0px;background:rgba(40,105,80,0.04)"></i><i style="left:9px;top:0px;background:rgba(40,105,80,0.07)"></i><i style="left:18px;top:0px;background:rgba(40,105,80,0.1)"></i><i style="left:27px;top:0px;background:rgba(40,105,80,0.02)"></i><i style="left:36px;top:0px;background:rgba(40,105,80,0.07)"></i><i style="left:45px;top:0px;background:rgba(40,105,80,0.07)"></i><i style="left:54px;top:0px;background:rgba(40,105,80,0.07)"></i><i style="left:63px;top:0px;background:rgba(40,105,80,0.14)"></i><i style="left:72px;top:0px;background:rgba(40,105,80,0.07)"></i><i style="left:81px;top:0px;background:rgba(40,105,80,0.04)"></i><i style="left:90px;top:0px;background:rgba(40,105,80,0.02)"></i><i style="left:99px;top:0px;background:rgba(40,105,80,0.07)"></i><i style="left:108px;top:0px;background:rgba(40,105,80,0.04)"></i><i style="left:117px;top:0px;background:rgba(40,105,80,0.07)"></i><i style="left:126px;top:0px;background:rgba(40,105,80,0.04)"></i><i style="left:0px;top:9px;background:rgba(40,105,80,0.12)"></i><i style="left:9px;top:9px;background:rgba(40,105,80,0.22)"></i><i style="left:18px;top:9px;background:rgba(40,105,80,0.27)"></i><i style="left:27px;top:9px;background:rgba(40,105,80,0.12)"></i><i style="left:36px;top:9px;background:rgba(40,105,80,0.27)"></i><i style="left:45px;top:9px;background:rgba(40,105,80,0.22)"></i><i style="left:54px;top:9px;background:rgba(40,105,80,0.32)"></i><i style="left:63px;top:9px;background:rgba(40,105,80,0.38)"></i><i style="left:72px;top:9px;background:rgba(40,105,80,0.17)"></i><i style="left:81px;top:9px;background:rgba(40,105,80,0.17)"></i><i style="left:90px;top:9px;background:rgba(40,105,80,0.32)"></i><i style="left:99px;top:9px;background:rgba(40,105,80,0.12)"></i><i style="left:108px;top:9px;background:rgba(40,105,80,0.12)"></i><i style="left:117px;top:9px;background:rgba(40,105,80,0.22)"></i><i style="left:126px;top:9px;background:rgba(40,105,80,0.12)"></i></div>
<div class="t" style="left:1080.5px;top:822.99px;font-size:14px;color:#174f36;letter-spacing:0.1px;-webkit-text-stroke:0.25px #174f36">2025-04-19</div>
<div class="t" style="left:1233.3px;top:822.99px;font-size:14px;color:#174f36;letter-spacing:0.15px;-webkit-text-stroke:0.25px #174f36">2025-05-19</div>
<div style="position:absolute;left:1443px;top:817.2px;width:100px;height:25.8px;background:#c3cc18;border-radius:4px"></div>
<div class="t" style="left:1477.5px;top:823.28px;font-size:12px;color:#fff;font-weight:700;letter-spacing:-0.15px;">Open</div>
<svg style="position:absolute;left:1797px;top:822.0px" width="20" height="16" viewBox="0 0 20 16"><circle cx="10" cy="8" r="2.2" fill="none" stroke="#6d6a7d" stroke-width="1.3"/><path d="M2.6 8 Q6 2.8 10 2.8 Q14 2.8 17.4 8 Q14 13.2 10 13.2 Q6 13.2 2.6 8 Z" fill="none" stroke="#6d6a7d" stroke-width="1.3" stroke-linejoin="round"/></svg>
<div class="t" style="left:302.2px;top:868.35px;font-size:14px;color:#b3b1bd;letter-spacing:0.12px;">Showing 1 to 10 of 288 entries</div>
<div style="position:absolute;left:1590px;top:859px;width:32px;height:32.7px;background:#67a4b3"></div>
<div class="t" style="left:1590px;top:868.3px;width:32px;text-align:center;font-size:14px;color:#fff;font-weight:700">1</div>
<div class="t" style="left:1617.4px;top:868.3px;width:40px;text-align:center;font-size:14px;color:#5f5b6f">2</div>
<div class="t" style="left:1649.3px;top:868.3px;width:40px;text-align:center;font-size:14px;color:#5f5b6f">3</div>
<div class="t" style="left:1681.4px;top:868.3px;width:40px;text-align:center;font-size:14px;color:#5f5b6f">4</div>
<div class="t" style="left:1713.5px;top:868.3px;width:40px;text-align:center;font-size:14px;color:#5f5b6f">5</div>
<div class="t" style="left:1787px;top:868.3px;width:40px;text-align:center;font-size:14px;color:#5f5b6f">29</div>
<div class="t" style="left:1748.6px;top:868.3px;width:40px;text-align:center;font-size:14px;color:#b3b1bd;letter-spacing:1px">...</div>
<svg style="position:absolute;left:1562px;top:867px" width="12" height="16" viewBox="0 0 12 16"><path d="M9 3 L3.5 8 L9 13" fill="none" stroke="#b3b1bd" stroke-width="1.4"/></svg>
<svg style="position:absolute;left:1843px;top:867px" width="12" height="16" viewBox="0 0 12 16"><path d="M3 3 L8.5 8 L3 13" fill="none" stroke="#5f5b6f" stroke-width="1.4"/></svg>

</body></html>
